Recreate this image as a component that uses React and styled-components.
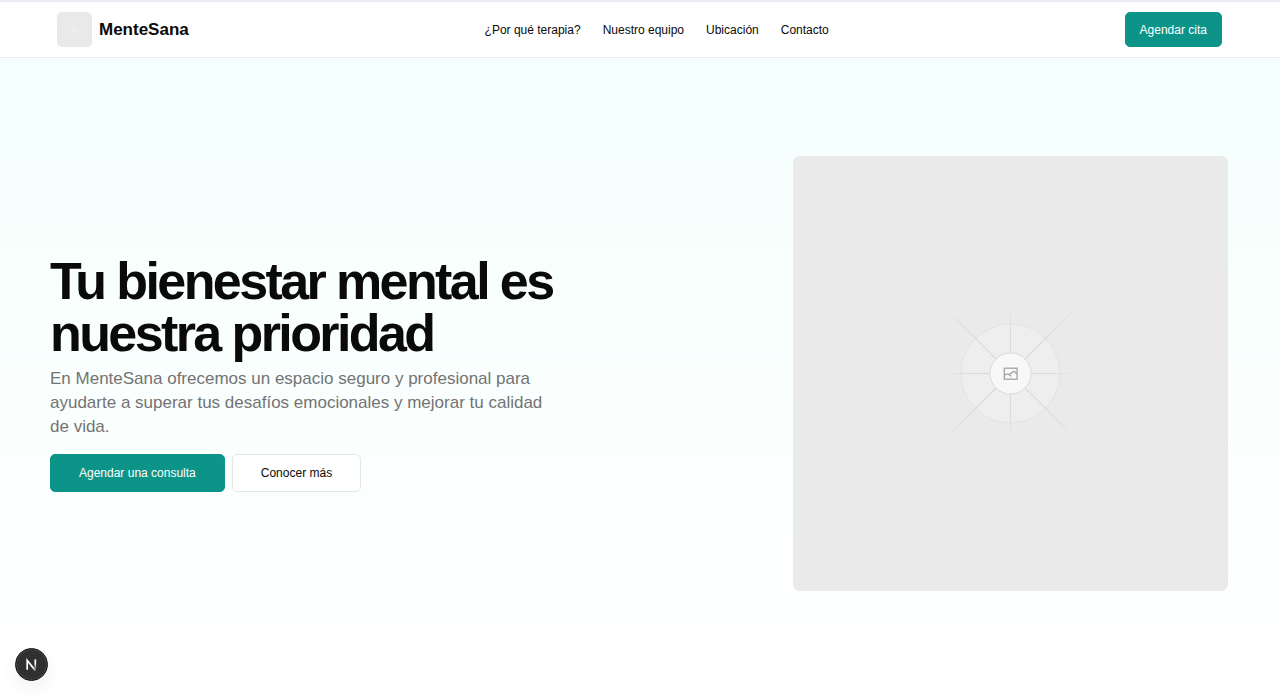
import React from "react";
import styled, { createGlobalStyle, css } from "styled-components";

const GlobalStyle = createGlobalStyle`
  *, *::before, *::after { box-sizing: border-box; }
  body {
    margin: 0;
    background: #ffffff;
    color: #0a0a0a;
    font-family: "Liberation Sans", Arial, Helvetica, sans-serif;
    -webkit-font-smoothing: antialiased;
  }
  h1, p { margin: 0; }
`;

const Header = styled.header`
  background: #ffffff;
  border-top: 2px solid #ebebf3;
  border-bottom: 1px solid #e8eeee;
`;

const HeaderInner = styled.div`
  display: flex;
  align-items: center;
  justify-content: space-between;
  height: 55px;
  padding: 0 58px 0 57px;
`;

const Brand = styled.a`
  display: flex;
  align-items: center;
  gap: 7px;
  color: inherit;
  font-size: 17px;
  font-weight: 700;
  line-height: 24px;
  text-decoration: none;
`;

const BrandImage = styled.svg`
  display: block;
  width: 35px;
  height: 35px;
  border-radius: 5px;
  background: #e9e9e9;
`;

const Nav = styled.nav`
  display: flex;
  gap: 22px;
`;

const NavLink = styled.a`
  color: inherit;
  font-size: 12px;
  line-height: 18px;
  text-decoration: none;
`;

const Button = styled.button`
  height: ${({ $large }) => ($large ? 38 : 35)}px;
  padding: 0 ${({ $large }) => ($large ? 28 : 14)}px;
  border: 1px solid #0d9488;
  border-radius: 5px;
  background: #0d9488;
  color: #ffffff;
  font-family: inherit;
  font-size: 12px;
  line-height: 18px;
  cursor: pointer;
  ${({ $outline }) =>
    $outline &&
    css`
      border-color: #e5e7e7;
      background: #ffffff;
      color: #0a0a0a;
    `}
`;

const Hero = styled.main`
  padding: 98px 52px 102px 50px;
  background: linear-gradient(to bottom, #f4fffd, #ffffff);
`;

const HeroGrid = styled.div`
  display: grid;
  grid-template-columns: minmax(0, 1fr) 435px;
  gap: 42px;
  align-items: center;
`;

const HeroCopy = styled.div`
  display: flex;
  flex-direction: column;
  gap: 8px;
`;

const Title = styled.h1`
  max-width: 560px;
  font-size: 52px;
  font-weight: 700;
  line-height: 52px;
  letter-spacing: -0.05em;
`;

const Lead = styled.p`
  max-width: 510px;
  color: #737373;
  font-size: 17px;
  line-height: 24px;
`;

const Actions = styled.div`
  display: flex;
  gap: 7px;
  padding-top: 7px;
`;

const HeroImage = styled.svg`
  display: block;
  width: 100%;
  aspect-ratio: 1;
  border-radius: 7px;
  background: #eaeaea;
`;

const DevBadge = styled.button`
  position: fixed;
  left: 15px;
  bottom: 13px;
  width: 33px;
  height: 33px;
  padding: 0;
  border: 1px solid #171717;
  border-radius: 50%;
  background: #303030;
  box-shadow: inset 0 0 0 1px #484848, 0 8px 20px rgba(0, 0, 0, 0.06);
  cursor: pointer;

  svg {
    display: block;
    margin: auto;
  }
`;

const links = [
  ["¿Por qué terapia?", "#terapia"],
  ["Nuestro equipo", "#equipo"],
  ["Ubicación", "#ubicacion"],
  ["Contacto", "#contacto"],
];

function Placeholder() {
  return (
    <HeroImage viewBox="0 0 435 435" role="img" aria-label="Imagen principal">
      <defs>
        <radialGradient id="ray" gradientUnits="userSpaceOnUse" cx="217.5" cy="217.5" r="94">
          <stop offset="0" stopColor="#d6d6d6" />
          <stop offset="0.5" stopColor="#dadada" />
          <stop offset="0.75" stopColor="#e0e0e0" />
          <stop offset="1" stopColor="#eaeaea" />
        </radialGradient>
        <radialGradient id="axis" gradientUnits="userSpaceOnUse" cx="217.5" cy="217.5" r="68">
          <stop offset="0" stopColor="#d6d6d6" />
          <stop offset="0.6" stopColor="#dadada" />
          <stop offset="1" stopColor="#eaeaea" />
        </radialGradient>
      </defs>
      <circle cx="217.5" cy="217.5" r="49.5" fill="#eeeeee" stroke="#e3e3e3" />
      <g stroke="url(#axis)" strokeWidth="1">
        <path d="M217.5 151V283" />
        <path d="M151 217.5H284" />
      </g>
      <g stroke="url(#ray)" strokeWidth="1.2">
        <path d="M153 153L282 282" />
        <path d="M282 153L153 282" />
      </g>
      <circle cx="217.5" cy="217.5" r="20.5" fill="#f8f8f8" stroke="#dcdcdc" />
      <g fill="none" stroke="#a3a3a3" strokeWidth="1.3">
        <rect x="211.3" y="212.2" width="12.8" height="11" />
        <path d="M211.5 219.2C213.5 217.4 216 217.8 218.2 220.4M216.6 218.6C216.9 217.4 217.9 217 218.8 217.2C219.2 214.9 221.8 214.8 222.4 216.8C223.2 216.8 223.8 217.4 224 218.2" />
      </g>
    </HeroImage>
  );
}

export default function App() {
  return (
    <>
      <GlobalStyle />
      <Header>
        <HeaderInner>
          <Brand href="#">
            <BrandImage viewBox="0 0 35 35" aria-hidden="true">
              <circle cx="17.5" cy="17.5" r="4" fill="#ebebeb" />
              <circle cx="17.5" cy="17.5" r="1.6" fill="#eeeeee" />
            </BrandImage>
            MenteSana
          </Brand>
          <Nav>
            {links.map(([label, href]) => (
              <NavLink key={href} href={href}>
                {label}
              </NavLink>
            ))}
          </Nav>
          <Button type="button">Agendar cita</Button>
        </HeaderInner>
      </Header>
      <Hero>
        <HeroGrid>
          <HeroCopy>
            <Title>Tu bienestar mental es nuestra prioridad</Title>
            <Lead>
              En MenteSana ofrecemos un espacio seguro y profesional para ayudarte a superar tus
              desafíos emocionales y mejorar tu calidad de vida.
            </Lead>
            <Actions>
              <Button type="button" $large>
                Agendar una consulta
              </Button>
              <Button type="button" $large $outline>
                Conocer más
              </Button>
            </Actions>
          </HeroCopy>
          <Placeholder />
        </HeroGrid>
      </Hero>
      <DevBadge type="button" aria-label="Next.js">
        <svg width="31" height="31" viewBox="0 0 31 31" fill="none" aria-hidden="true">
          <defs>
            <linearGradient id="nStem" x1="0" y1="10" x2="0" y2="21" gradientUnits="userSpaceOnUse">
              <stop offset="0.4" stopColor="#ffffff" />
              <stop offset="1" stopColor="#ffffff" stopOpacity="0.1" />
            </linearGradient>
            <linearGradient id="nSlash" x1="11" y1="11" x2="21" y2="23" gradientUnits="userSpaceOnUse">
              <stop offset="0.6" stopColor="#ffffff" />
              <stop offset="1" stopColor="#ffffff" stopOpacity="0.1" />
            </linearGradient>
          </defs>
          <path d="M11.2 20.8V11.4L19.4 21.6" stroke="url(#nSlash)" strokeWidth="1.7" />
          <path d="M19.3 10.4V19.8" stroke="url(#nStem)" strokeWidth="1.7" />
        </svg>
      </DevBadge>
    </>
  );
}
